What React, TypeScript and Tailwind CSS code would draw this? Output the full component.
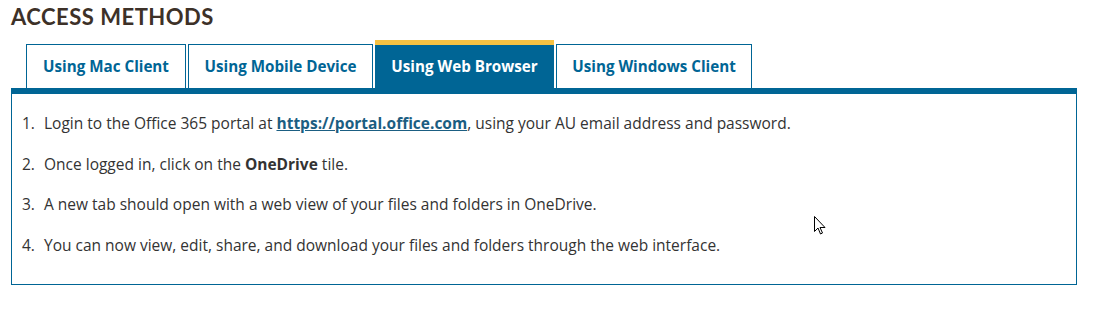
import React from 'react'

const tabs = [
    { label: 'Using Mac Client', w: 'w-[160px]' },
    { label: 'Using Mobile Device', w: 'w-[185px]' },
    { label: 'Using Web Browser', w: 'w-[179px]' },
    { label: 'Using Windows Client', w: 'w-[196px]' },
]

function Tab({ label, w, active }: { label: string; w: string; active: boolean }) {
    if (active) {
        return (
            <div className={`flex flex-col ${w}`}>
                <div className="h-[5px] bg-[#f7c242]" />
                <div className="flex h-[43px] items-center justify-center bg-[#006595] text-[15.2px] font-bold text-white">
                    {label}
                </div>
            </div>
        )
    }
    return (
        <div className={`flex h-[44px] items-center justify-center border border-b-0 border-[#006595] bg-white text-[15.2px] font-bold text-[#006595] ${w}`}>
            {label}
        </div>
    )
}

export default function App() {
    return (
        <div className="relative h-[312px] w-[1105px] bg-white px-[11px] pt-[5px] font-['Open_Sans',sans-serif]">
            <h2 className="font-['Lato',sans-serif] text-[22px] font-bold leading-[24px] tracking-[0.5px] text-[#3d3128]">
                ACCESS METHODS
            </h2>
            <div className="mt-[11px] flex items-end gap-[2px] pl-[15px]">
                {tabs.map((t) => (
                    <Tab key={t.label} label={t.label} w={t.w} active={t.label === 'Using Web Browser'} />
                ))}
            </div>
            <div className="w-[1066px] border border-t-0 border-[#006595]">
                <div className="h-[6px] bg-[#006595]" />
                <ol className="flex flex-col gap-[19.5px] pb-[28px] pl-[10px] pt-[19px] text-[15.5px] leading-[21px] text-[#333]">
                    <li className="flex">
                        <span className="w-[22px]">1.</span>
                        <span>
                            Login to the Office 365 portal at{' '}
                            <a href="#" className="font-bold text-[#1b5e82] underline">https://portal.office.com</a>,
                            using your AU email address and password.
                        </span>
                    </li>
                    <li className="flex">
                        <span className="w-[22px]">2.</span>
                        <span>
                            Once logged in, click on the <b>OneDrive</b> tile.
                        </span>
                    </li>
                    <li className="flex">
                        <span className="w-[22px]">3.</span>
                        <span>A new tab should open with a web view of your files and folders in OneDrive.</span>
                    </li>
                    <li className="flex">
                        <span className="w-[22px]">4.</span>
                        <span>You can now view, edit, share, and download your files and folders through the web interface.</span>
                    </li>
                </ol>
            </div>
            <svg className="absolute left-[814px] top-[216px]" width="13" height="20" viewBox="0 0 13 20">
                <path d="M0.5 0.5 L0.5 15.5 L4 12 L6.5 18 L8.5 17 L6 11.5 L11 11.5 Z" fill="white" stroke="black" strokeWidth="1" />
            </svg>
        </div>
    )
}
